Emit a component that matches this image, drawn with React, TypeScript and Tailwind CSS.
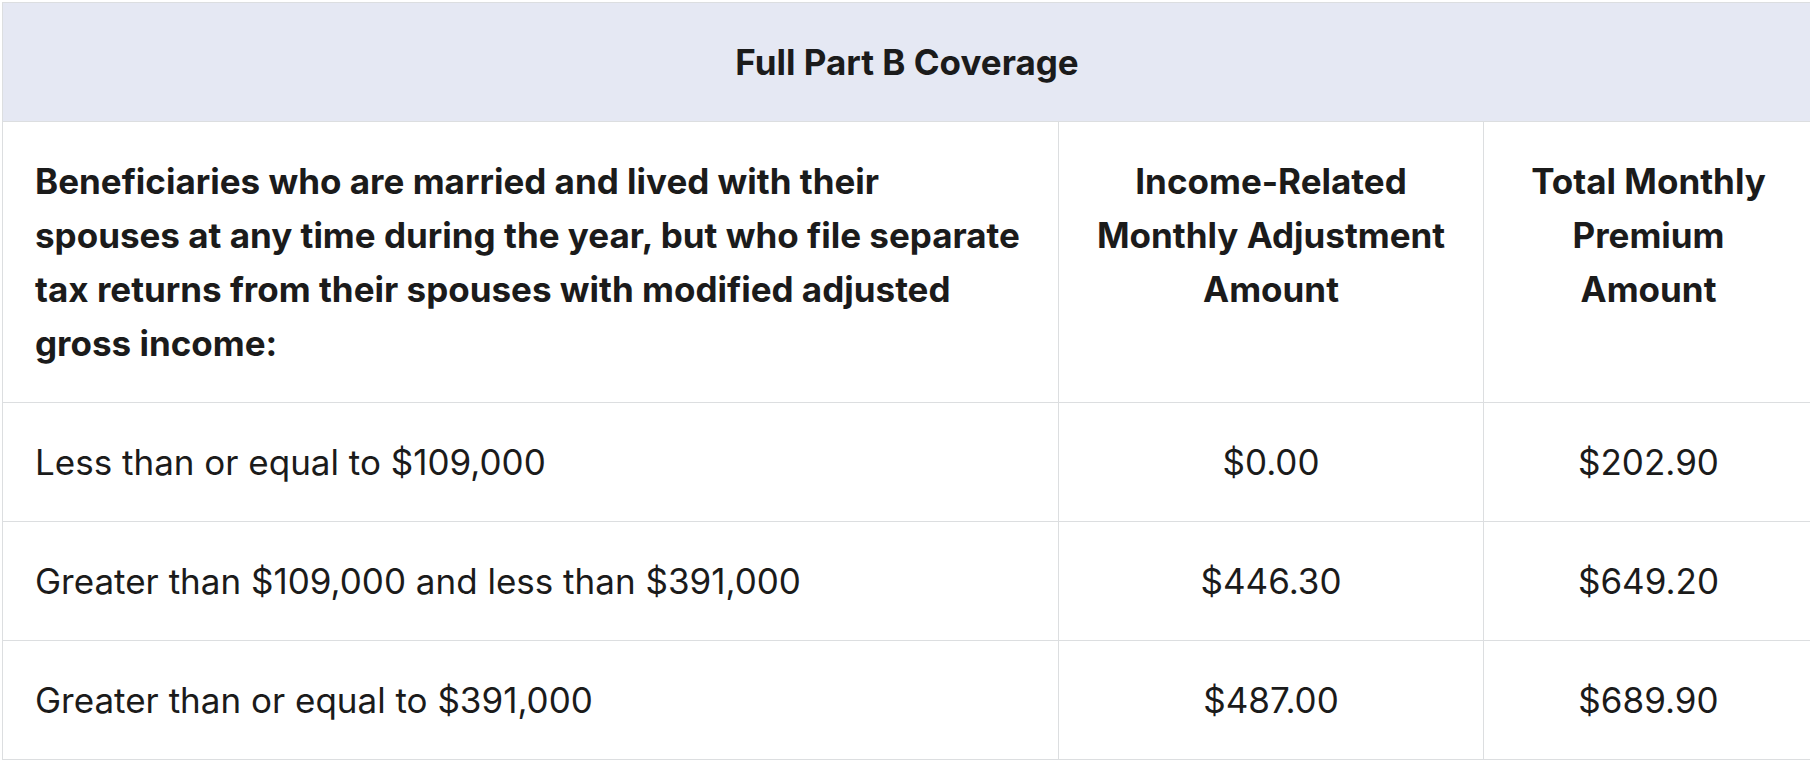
import React from "react";

const rows = [
  ["Less than or equal to $109,000", "$0.00", "$202.90"],
  ["Greater than $109,000 and less than $391,000", "$446.30", "$649.20"],
  ["Greater than or equal to $391,000", "$487.00", "$689.90"],
];

export default function App() {
  return (
    <div
      className="w-[1810px] h-[764px] overflow-hidden bg-white text-[#1b1b1b]"
      style={{ fontFamily: "Inter, 'Noto Sans', sans-serif" }}
    >
      <div className="pt-[2px] pl-[2px]">
        <table className="border-collapse w-[1830px] table-fixed text-[35px] leading-[54px]">
          <colgroup>
            <col className="w-[1056px]" />
            <col className="w-[425px]" />
            <col />
          </colgroup>
          <thead>
            <tr>
              <th
                colSpan={3}
                className="bg-[#e5e8f3] border border-[#dcdee0] px-8 py-8 font-bold text-center"
              >
                <span className="pr-[20px]">Full Part B Coverage</span>
              </th>
            </tr>
            <tr>
              <th className="border border-[#dcdee0] pl-8 pr-2 py-8 font-bold text-left align-top whitespace-nowrap">
                Beneficiaries who are married and lived with their
                <br />
                spouses at any time during the year, but who file separate
                <br />
                tax returns from their spouses with modified adjusted
                <br />
                gross income:
              </th>
              <th className="border border-[#dcdee0] px-4 py-8 font-bold text-center align-top">
                Income-Related
                <br />
                Monthly Adjustment
                <br />
                Amount
              </th>
              <th className="border border-[#dcdee0] px-8 py-8 font-bold text-center align-top">
                <div className="w-[265px]">
                  Total Monthly
                  <br />
                  Premium
                  <br />
                  Amount
                </div>
              </th>
            </tr>
          </thead>
          <tbody>
            {rows.map((r) => (
              <tr key={r[0]}>
                <td className="border border-[#dcdee0] px-8 py-8 text-left">{r[0]}</td>
                <td className="border border-[#dcdee0] px-8 py-8 text-center">{r[1]}</td>
                <td className="border border-[#dcdee0] px-8 py-8">
                  <div className="w-[265px] text-center">{r[2]}</div>
                </td>
              </tr>
            ))}
          </tbody>
        </table>
      </div>
    </div>
  );
}
